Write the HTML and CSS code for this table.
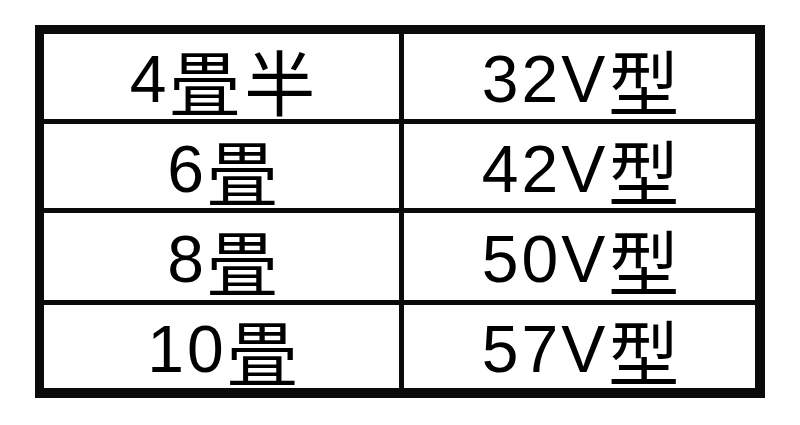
FILE: index.html
```html
<!DOCTYPE html>
<html lang="ja">
<head>
<meta charset="utf-8">
<title>畳数とテレビサイズ</title>
<link rel="stylesheet" href="styles.css">
</head>
<body>
<div class="grid">
  <div class="cell">4<span class="k">畳半</span></div>
  <div class="cell">32V<span class="k">型</span></div>
  <div class="cell">6<span class="k">畳</span></div>
  <div class="cell">42V<span class="k">型</span></div>
  <div class="cell">8<span class="k">畳</span></div>
  <div class="cell">50V<span class="k">型</span></div>
  <div class="cell">10<span class="k">畳</span></div>
  <div class="cell">57V<span class="k">型</span></div>
</div>
</body>
</html>
```
FILE: styles.css
```css
html, body {
  margin: 0;
  padding: 0;
  background: #ffffff;
}
body {
  width: 800px;
  height: 425px;
  overflow: hidden;
}
.grid {
  margin: 25px 0 0 35px;
  width: 730px;
  box-sizing: border-box;
  display: grid;
  grid-template-columns: 355px 351px;
  grid-template-rows: 85px 84px 87px 83px;
  gap: 5px;
  padding: 9px 10px 10px 9px;
  background: #0a0a0a;
}
.cell {
  background: #ffffff;
  display: flex;
  align-items: center;
  justify-content: center;
  box-sizing: border-box;
  padding: 5px 0 0 6px;
  font-family: "Liberation Sans", "Noto Sans CJK JP", sans-serif;
  font-size: 66px;
  line-height: 78px;
  letter-spacing: 3px;
  color: #000000;
  white-space: nowrap;
}
.k {
  font-family: "Noto Sans CJK JP", sans-serif;
  font-size: 71px;
  line-height: 0;
  letter-spacing: 4px;
  vertical-align: 3px;
}
```
